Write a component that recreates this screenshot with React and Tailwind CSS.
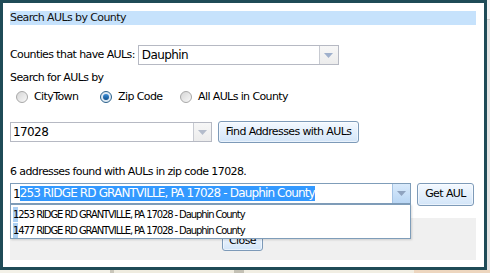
import React from "react";

const Arrow = ({ color = "#9fb0cc" }) => (
  <svg width="9" height="5" viewBox="0 0 9 5">
    <path d="M0 0 H9 L4.5 5 Z" fill={color} />
  </svg>
);

const Radio = ({ checked }) =>
  checked ? (
    <span className="w-[12px] h-[12px] rounded-full border border-[#2c628b] bg-[#dfeaf4] flex items-center justify-center">
      <span className="w-[6px] h-[6px] rounded-full bg-gradient-to-b from-[#3c8ed6] to-[#0c4f8e]" />
    </span>
  ) : (
    <span className="w-[12px] h-[12px] rounded-full border border-[#a8a8a8] bg-gradient-to-br from-[#d6d6d6] to-[#f8f8f8]" />
  );

const Button = ({ label, className }) => (
  <div
    className={`flex items-center justify-center rounded-[3px] border border-[#7d9ab8] bg-gradient-to-b from-[#f4f9ff] to-[#d3e5f8] text-black shadow-[inset_0_0_0_1px_#ffffff80] ${className}`}
  >
    {label}
  </div>
);

export default function App() {
  const addresses = [
    "1253 RIDGE RD GRANTVILLE, PA 17028 - Dauphin County",
    "1477 RIDGE RD GRANTVILLE, PA 17028 - Dauphin County",
  ];

  return (
    <div className="w-[490px] h-[273px] overflow-hidden bg-[#eeeadf] font-['DejaVu_Sans',sans-serif] text-[11px] tracking-[-0.6px] text-black">
      <div className="flex h-[270px]">
        <div className="w-[487px] h-[270px] border-[3px] border-[#1f4b57] bg-white flex flex-col pt-[8px] pl-[7px] pr-[8px]">
          {/* title */}
          <div className="h-[14px] leading-[14px] bg-[#c6e2fc] text-[#111]">Search AULs by County</div>

          {/* county */}
          <div className="mt-[20px] h-[20px] flex items-center">
            <span className="mr-[3px]">Counties that have AULs:</span>
            <div className="w-[201px] h-[20px] border border-[#b6b9c3] flex">
              <div className="flex-1 pl-[3px] leading-[18px] text-[12px] tracking-[-0.6px]">Dauphin</div>
              <div className="w-[19px] border-l border-[#c7cad1] bg-gradient-to-b from-[#f7f7f7] to-[#ececec] flex items-center justify-center">
                <Arrow />
              </div>
            </div>
          </div>

          <div className="mt-[6px] h-[14px] leading-[14px]">Search for AULs by</div>

          {/* radios */}
          <div className="mt-[5px] h-[14px] flex items-center pl-[6px]">
            <div className="w-[84px] flex items-center gap-[6px]">
              <Radio />
              <span>CityTown</span>
            </div>
            <div className="w-[80px] flex items-center gap-[6px]">
              <Radio checked />
              <span>Zip Code</span>
            </div>
            <div className="flex items-center gap-[6px]">
              <Radio />
              <span>All AULs in County</span>
            </div>
          </div>

          {/* zip */}
          <div className="mt-[17px] h-[22px] flex items-center gap-[6px]">
            <div className="w-[202px] h-[20px] border border-[#b6b9c3] flex">
              <div className="flex-1 pl-[2px] leading-[18px] text-[12px] tracking-[-0.6px]">17028</div>
              <div className="w-[18px] border-l border-[#c7cad1] bg-gradient-to-b from-[#f7f7f7] to-[#ececec] flex items-center justify-center">
                <Arrow color="#b4bccb" />
              </div>
            </div>
            <Button label="Find Addresses with AULs" className="w-[141px] h-[22px]" />
          </div>

          <div className="mt-[22px] h-[14px] leading-[14px]">6 addresses found with AULs in zip code 17028.</div>

          {/* address */}
          <div className="mt-[4px] h-[23px] flex items-start gap-[6px]">
            <div className="relative w-[401px] h-[21px] border border-[#7f9db9] flex">
              <div className="flex-1 pl-[2px] flex items-center text-[12px] tracking-[-0.85px] whitespace-nowrap overflow-hidden">
                <span>1</span>
                <span className="bg-[#3399ff] text-white leading-[15px]">
                  253 RIDGE RD GRANTVILLE, PA 17028 - Dauphin County
                </span>
              </div>
              <div className="w-[18px] border-l border-[#a6c3e3] bg-gradient-to-b from-[#d9eafb] to-[#b9d6f4] flex items-center justify-center">
                <Arrow color="#8fa3bf" />
              </div>
              <div className="absolute left-[-1px] top-[20px] w-[401px] h-[35px] border border-[#7f9db9] bg-white z-10 flex flex-col pt-[1px] shadow-[1px_1px_2px_rgba(0,0,0,0.15)]">
                {addresses.map((a) => (
                  <div key={a} className="h-[17px] pl-[2px] flex items-center text-[10px] tracking-[-1.1px] whitespace-nowrap">
                    <span className="bg-[#acd0f3]">{a[0]}</span>
                    <span>{a.slice(1)}</span>
                  </div>
                ))}
              </div>
            </div>
            <Button label="Get AUL" className="w-[57px] h-[23px]" />
          </div>

          {/* footer */}
          <div className="mt-[12px] h-[42px] bg-[#f0f0f0] flex justify-center pt-[14px]">
            <Button label="Close" className="w-[41px] h-[19px] ml-[-1px]" />
          </div>
        </div>
        <div className="w-[3px] bg-[#e4e4e4] flex flex-col">
          <div className="h-[20px] bg-[#f4f4f4] border-b border-[#cfcfcf]" />
        </div>
      </div>
      <div className="h-[3px] flex">
        <div className="w-[110px] bg-[#f3f1e8]" />
        <div className="w-[4px] bg-[#c9c6ba]" />
        <div className="w-[120px] bg-[#efece0]" />
        <div className="w-[10px] bg-[#c4c1b5]" />
        <div className="w-[170px] bg-[#f1eee3]" />
        <div className="flex-1 bg-[#edd6bf]" />
      </div>
    </div>
  );
}
